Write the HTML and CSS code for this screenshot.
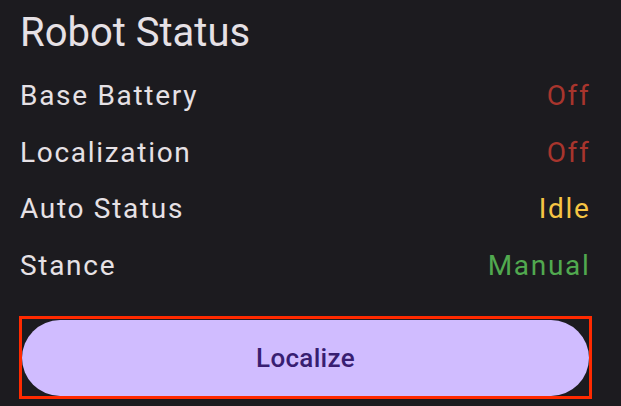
FILE: index.html
```html
<!DOCTYPE html>
<html>
<head>
<meta charset="utf-8">
<link rel="stylesheet" href="styles.css">
</head>
<body>
<div class="panel">
  <h1 class="title">Robot Status</h1>
  <div class="rows">
    <div class="row"><span class="label">Base Battery</span><span class="value off">Off</span></div>
    <div class="row"><span class="label">Localization</span><span class="value off">Off</span></div>
    <div class="row"><span class="label">Auto Status</span><span class="value idle">Idle</span></div>
    <div class="row"><span class="label">Stance</span><span class="value manual">Manual</span></div>
  </div>
  <div class="focus">
    <button class="btn">Localize</button>
  </div>
</div>
</body>
</html>
```
FILE: styles.css
```css
html, body {
  margin: 0;
  padding: 0;
  background: #1c1b1f;
  width: 621px;
  height: 406px;
  overflow: hidden;
}
.panel {
  padding: 9px 30px 0 20px;
  font-family: Roboto, "Noto Sans", sans-serif;
  color: #e6e1e5;
}
.title {
  margin: 0;
  font-size: 40px;
  font-weight: 400;
  line-height: 48px;
}
.rows {
  display: flex;
  flex-direction: column;
  margin-top: 11px;
}
.row {
  display: flex;
  justify-content: space-between;
  align-items: center;
  height: 56.5px;
  font-size: 28px;
  line-height: 56px;
  letter-spacing: 1.7px;
}
.value { margin-right: 0.5px; }
.off { color: #a8352d; }
.idle { color: #f6c544; }
.manual { color: #51a94f; }
.focus {
  margin-top: 22px;
  margin-left: -1px;
  margin-right: -1px;
  border: 3px solid #ff2a00;
  padding: 1px 0 0 0;
}
.btn {
  display: block;
  width: 100%;
  height: 76px;
  border: none;
  border-radius: 38px;
  background: #d0bcff;
  color: #381e72;
  font-family: Roboto, "Noto Sans", sans-serif;
  font-size: 26px;
  font-weight: 500;
  letter-spacing: 0.3px;
}
```
